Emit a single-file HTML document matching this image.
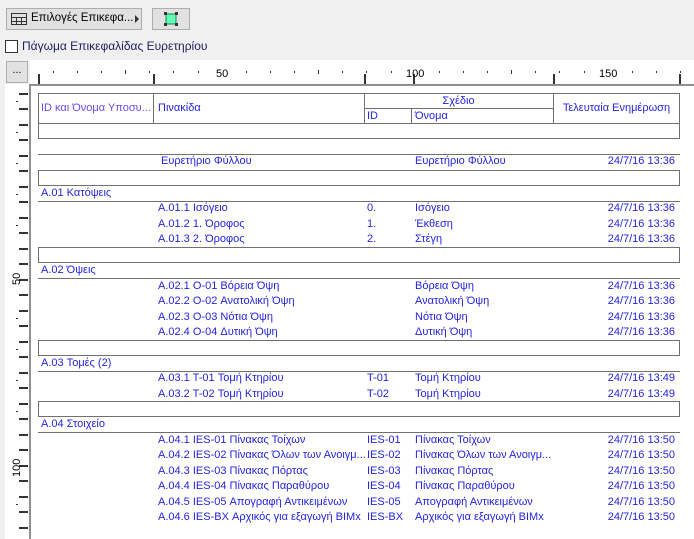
<!DOCTYPE html>
<html><head><meta charset="utf-8"><style>
body{margin:0;width:694px;height:539px;background:#f0f0f0;position:relative;overflow:hidden;font-family:"Liberation Sans","DejaVu Sans",sans-serif;}
.a{position:absolute;}
.t{position:absolute;font-size:11px;color:#2424e0;white-space:nowrap;line-height:14px;}
.r{text-align:right;}
.h{position:absolute;height:1px;background:#707070;}
.v{position:absolute;width:1px;background:#707070;}
.bx{position:absolute;border:1px solid #707070;box-sizing:border-box;}
.tk{position:absolute;background:#333;}
</style></head><body>
<div class="a" style="left:6px;top:8px;width:136px;height:22px;background:#e1e1e1;border:1px solid #adadad;box-sizing:border-box;"></div>
<svg class="a" style="left:11px;top:12px" width="16" height="14"><rect x="0.5" y="1.5" width="15" height="11" fill="none" stroke="#333"/><line x1="0" y1="5.5" x2="16" y2="5.5" stroke="#333"/><line x1="0" y1="9.5" x2="16" y2="9.5" stroke="#333"/><line x1="5.5" y1="5" x2="5.5" y2="13" stroke="#333"/><line x1="10.5" y1="5" x2="10.5" y2="13" stroke="#333"/></svg>
<div class="a" style="left:31px;top:12px;font-size:11.5px;color:#000;">Επιλογές Επικεφα...</div>
<svg class="a" style="left:134px;top:14px" width="6" height="10"><path d="M1 1 L5 5 L1 9Z" fill="#333"/></svg>
<div class="a" style="left:152px;top:8px;width:38px;height:22px;background:#e1e1e1;border:1px solid #adadad;box-sizing:border-box;"></div>
<svg class="a" style="left:163px;top:11px" width="16" height="16"><rect x="3" y="3" width="10" height="10" fill="#5effb0" stroke="#208050"/><rect x="1" y="1" width="3" height="3" fill="#333"/><rect x="12" y="1" width="3" height="3" fill="#333"/><rect x="1" y="12" width="3" height="3" fill="#333"/><rect x="12" y="12" width="3" height="3" fill="#333"/></svg>
<div class="a" style="left:5px;top:40px;width:13px;height:13px;background:#fff;border:1px solid #333;box-sizing:border-box;"></div>
<div class="a" style="left:22px;top:39px;font-size:12px;color:#202060;">Πάγωμα Επικεφαλίδας Ευρετηρίου</div>
<div class="a" style="left:30px;top:60px;width:664px;height:24px;background:#fff;"></div>
<div class="a" style="left:5px;top:84px;width:24px;height:455px;background:#fff;"></div>
<div class="a" style="left:6px;top:61px;width:22px;height:22px;background:#e1e1e1;border:1px solid #adadad;box-sizing:border-box;font-size:11px;text-align:center;line-height:16px;color:#000;">...</div>
<div class="a" style="left:29px;top:84px;width:665px;height:2px;background:#909090;"></div>
<div class="a" style="left:29px;top:84px;width:2px;height:455px;background:#909090;"></div>
<div class="a" style="left:31px;top:86px;width:663px;height:453px;background:#fff;"></div>
<div class="tk" style="left:38px;top:74px;width:2px;height:10px"></div>
<div class="tk" style="left:153px;top:74px;width:2px;height:10px"></div>
<div class="tk" style="left:364px;top:74px;width:2px;height:10px"></div>
<div class="tk" style="left:413px;top:74px;width:2px;height:10px"></div>
<div class="tk" style="left:553px;top:74px;width:2px;height:10px"></div>
<div class="tk" style="left:679px;top:74px;width:2px;height:10px"></div>
<svg class="a" style="left:0;top:60px" width="694" height="24"><g fill="#333">
<rect x="53" y="11" width="1" height="2"/><rect x="77" y="11" width="1" height="2"/><rect x="101" y="11" width="1" height="2"/><rect x="125" y="10" width="1" height="4"/><rect x="149" y="11" width="1" height="2"/><rect x="173" y="11" width="1" height="2"/><rect x="198" y="11" width="1" height="2"/><rect x="246" y="11" width="1" height="2"/><rect x="270" y="11" width="1" height="2"/><rect x="294" y="11" width="1" height="2"/><rect x="318" y="10" width="1" height="4"/><rect x="342" y="11" width="1" height="2"/><rect x="366" y="11" width="1" height="2"/><rect x="391" y="11" width="1" height="2"/><rect x="439" y="11" width="1" height="2"/><rect x="463" y="11" width="1" height="2"/><rect x="487" y="11" width="1" height="2"/><rect x="511" y="10" width="1" height="4"/><rect x="535" y="11" width="1" height="2"/><rect x="559" y="11" width="1" height="2"/><rect x="584" y="11" width="1" height="2"/><rect x="632" y="11" width="1" height="2"/><rect x="656" y="11" width="1" height="2"/><rect x="680" y="11" width="1" height="2"/></g>
<text x="216" y="17" font-size="11" font-family="Liberation Sans">50</text><text x="406" y="17" font-size="11" font-family="Liberation Sans">100</text><text x="599" y="17" font-size="11" font-family="Liberation Sans">150</text></svg>
<svg class="a" style="left:0;top:86px" width="29" height="453"><g fill="#333">
<rect x="19" y="7" width="9" height="2"/><rect x="19" y="22" width="9" height="2"/><rect x="19" y="38" width="9" height="2"/><rect x="19" y="53" width="9" height="2"/><rect x="19" y="69" width="9" height="2"/><rect x="19" y="84" width="9" height="2"/><rect x="19" y="100" width="9" height="2"/><rect x="19" y="115" width="9" height="2"/><rect x="19" y="131" width="9" height="2"/><rect x="19" y="146" width="9" height="2"/><rect x="19" y="162" width="9" height="2"/><rect x="19" y="177" width="9" height="2"/><rect x="19" y="193" width="9" height="2"/><rect x="19" y="208" width="9" height="2"/><rect x="19" y="224" width="9" height="2"/><rect x="19" y="239" width="9" height="2"/><rect x="19" y="255" width="9" height="2"/><rect x="19" y="270" width="9" height="2"/><rect x="19" y="286" width="9" height="2"/><rect x="19" y="301" width="9" height="2"/><rect x="19" y="317" width="9" height="2"/><rect x="19" y="332" width="9" height="2"/><rect x="19" y="348" width="9" height="2"/><rect x="19" y="363" width="9" height="2"/><rect x="19" y="379" width="9" height="2"/><rect x="19" y="394" width="9" height="2"/><rect x="19" y="410" width="9" height="2"/><rect x="19" y="425" width="9" height="2"/><rect x="19" y="441" width="9" height="2"/>
<rect x="16" y="15" width="2" height="1"/><rect x="16" y="46" width="2" height="1"/><rect x="16" y="77" width="2" height="1"/><rect x="16" y="108" width="2" height="1"/><rect x="16" y="139" width="2" height="1"/><rect x="16" y="232" width="2" height="1"/><rect x="16" y="263" width="2" height="1"/><rect x="16" y="294" width="2" height="1"/><rect x="16" y="325" width="2" height="1"/><rect x="16" y="418" width="2" height="1"/></g>
<text transform="translate(20,199) rotate(-90)" font-size="11" font-family="Liberation Sans">50</text><text transform="translate(20,391) rotate(-90)" font-size="11" font-family="Liberation Sans">100</text></svg>
<div class="bx" style="left:38px;top:93px;width:642px;height:46px;"></div>
<div class="h" style="left:38px;top:123px;width:642px;"></div>
<div class="v" style="left:153px;top:93px;height:30px;"></div>
<div class="v" style="left:364px;top:93px;height:30px;"></div>
<div class="v" style="left:411px;top:108px;height:15px;"></div>
<div class="v" style="left:553px;top:93px;height:30px;"></div>
<div class="h" style="left:364px;top:108px;width:189px;"></div>
<div class="t" style="left:41px;top:101px;color:#6a4af0">ID και Όνομα Υποσυ...</div>
<div class="t" style="left:158px;top:101px">Πινακίδα</div>
<div class="t" style="left:364px;top:94px;width:189px;text-align:center">Σχέδιο</div>
<div class="t" style="left:367px;top:109px">ID</div>
<div class="t" style="left:415px;top:109px">Όνομα</div>
<div class="t" style="left:553px;top:101px;width:127px;text-align:center">Τελευταία Ενημέρωση</div>
<div class="h" style="left:38px;top:154px;width:642px;"></div>
<div class="t" style="left:161px;top:154px">Ευρετήριο Φύλλου</div><div class="t" style="left:415px;top:154px">Ευρετήριο Φύλλου</div><div class="t r" style="left:575px;top:154px;width:100px">24/7/16 13:36</div>
<div class="bx" style="left:38px;top:170px;width:642px;height:16px;"></div>
<div class="t" style="left:41px;top:186px">A.01 Κατόψεις</div><div class="h" style="left:38px;top:201px;width:642px;"></div>
<div class="t" style="left:158px;top:201px">A.01.1 Ισόγειο</div><div class="t" style="left:367px;top:201px">0.</div><div class="t" style="left:415px;top:201px">Ισόγειο</div><div class="t r" style="left:575px;top:201px;width:100px">24/7/16 13:36</div>
<div class="t" style="left:158px;top:217px">A.01.2 1. Όροφος</div><div class="t" style="left:367px;top:217px">1.</div><div class="t" style="left:415px;top:217px">Έκθεση</div><div class="t r" style="left:575px;top:217px;width:100px">24/7/16 13:36</div>
<div class="t" style="left:158px;top:232px">A.01.3 2. Όροφος</div><div class="t" style="left:367px;top:232px">2.</div><div class="t" style="left:415px;top:232px">Στέγη</div><div class="t r" style="left:575px;top:232px;width:100px">24/7/16 13:36</div>
<div class="bx" style="left:38px;top:247px;width:642px;height:16px;"></div>
<div class="t" style="left:41px;top:263px">A.02 Όψεις</div><div class="h" style="left:38px;top:278px;width:642px;"></div>
<div class="t" style="left:158px;top:279px">A.02.1 O-01 Βόρεια Όψη</div><div class="t" style="left:415px;top:279px">Βόρεια Όψη</div><div class="t r" style="left:575px;top:279px;width:100px">24/7/16 13:36</div>
<div class="t" style="left:158px;top:294px">A.02.2 O-02 Ανατολική Όψη</div><div class="t" style="left:415px;top:294px">Ανατολική Όψη</div><div class="t r" style="left:575px;top:294px;width:100px">24/7/16 13:36</div>
<div class="t" style="left:158px;top:310px">A.02.3 O-03 Νότια Όψη</div><div class="t" style="left:415px;top:310px">Νότια Όψη</div><div class="t r" style="left:575px;top:310px;width:100px">24/7/16 13:36</div>
<div class="t" style="left:158px;top:325px">A.02.4 O-04 Δυτική Όψη</div><div class="t" style="left:415px;top:325px">Δυτική Όψη</div><div class="t r" style="left:575px;top:325px;width:100px">24/7/16 13:36</div>
<div class="bx" style="left:38px;top:340px;width:642px;height:16px;"></div>
<div class="t" style="left:41px;top:356px">A.03 Τομές (2)</div><div class="h" style="left:38px;top:371px;width:642px;"></div>
<div class="t" style="left:158px;top:371px">A.03.1 T-01 Τομή Κτηρίου</div><div class="t" style="left:367px;top:371px">T-01</div><div class="t" style="left:415px;top:371px">Τομή Κτηρίου</div><div class="t r" style="left:575px;top:371px;width:100px">24/7/16 13:49</div>
<div class="t" style="left:158px;top:387px">A.03.2 T-02 Τομή Κτηρίου</div><div class="t" style="left:367px;top:387px">T-02</div><div class="t" style="left:415px;top:387px">Τομή Κτηρίου</div><div class="t r" style="left:575px;top:387px;width:100px">24/7/16 13:49</div>
<div class="bx" style="left:38px;top:401px;width:642px;height:16px;"></div>
<div class="t" style="left:41px;top:417px">A.04 Στοιχείο</div><div class="h" style="left:38px;top:432px;width:642px;"></div>
<div class="t" style="left:158px;top:433px">A.04.1 IES-01 Πίνακας Τοίχων</div><div class="t" style="left:367px;top:433px">IES-01</div><div class="t" style="left:415px;top:433px">Πίνακας Τοίχων</div><div class="t r" style="left:575px;top:433px;width:100px">24/7/16 13:50</div>
<div class="t" style="left:158px;top:448px">A.04.2 IES-02 Πίνακας Όλων των Ανοιγμ...</div><div class="t" style="left:367px;top:448px">IES-02</div><div class="t" style="left:415px;top:448px">Πίνακας Όλων των Ανοιγμ...</div><div class="t r" style="left:575px;top:448px;width:100px">24/7/16 13:50</div>
<div class="t" style="left:158px;top:464px">A.04.3 IES-03 Πίνακας Πόρτας</div><div class="t" style="left:367px;top:464px">IES-03</div><div class="t" style="left:415px;top:464px">Πίνακας Πόρτας</div><div class="t r" style="left:575px;top:464px;width:100px">24/7/16 13:50</div>
<div class="t" style="left:158px;top:479px">A.04.4 IES-04 Πίνακας Παραθύρου</div><div class="t" style="left:367px;top:479px">IES-04</div><div class="t" style="left:415px;top:479px">Πίνακας Παραθύρου</div><div class="t r" style="left:575px;top:479px;width:100px">24/7/16 13:50</div>
<div class="t" style="left:158px;top:495px">A.04.5 IES-05 Απογραφή Αντικειμένων</div><div class="t" style="left:367px;top:495px">IES-05</div><div class="t" style="left:415px;top:495px">Απογραφή Αντικειμένων</div><div class="t r" style="left:575px;top:495px;width:100px">24/7/16 13:50</div>
<div class="t" style="left:158px;top:510px">A.04.6 IES-BX Αρχικός για εξαγωγή BIMx</div><div class="t" style="left:367px;top:510px">IES-BX</div><div class="t" style="left:415px;top:510px">Αρχικός για εξαγωγή BIMx</div><div class="t r" style="left:575px;top:510px;width:100px">24/7/16 13:50</div>
</body></html>
